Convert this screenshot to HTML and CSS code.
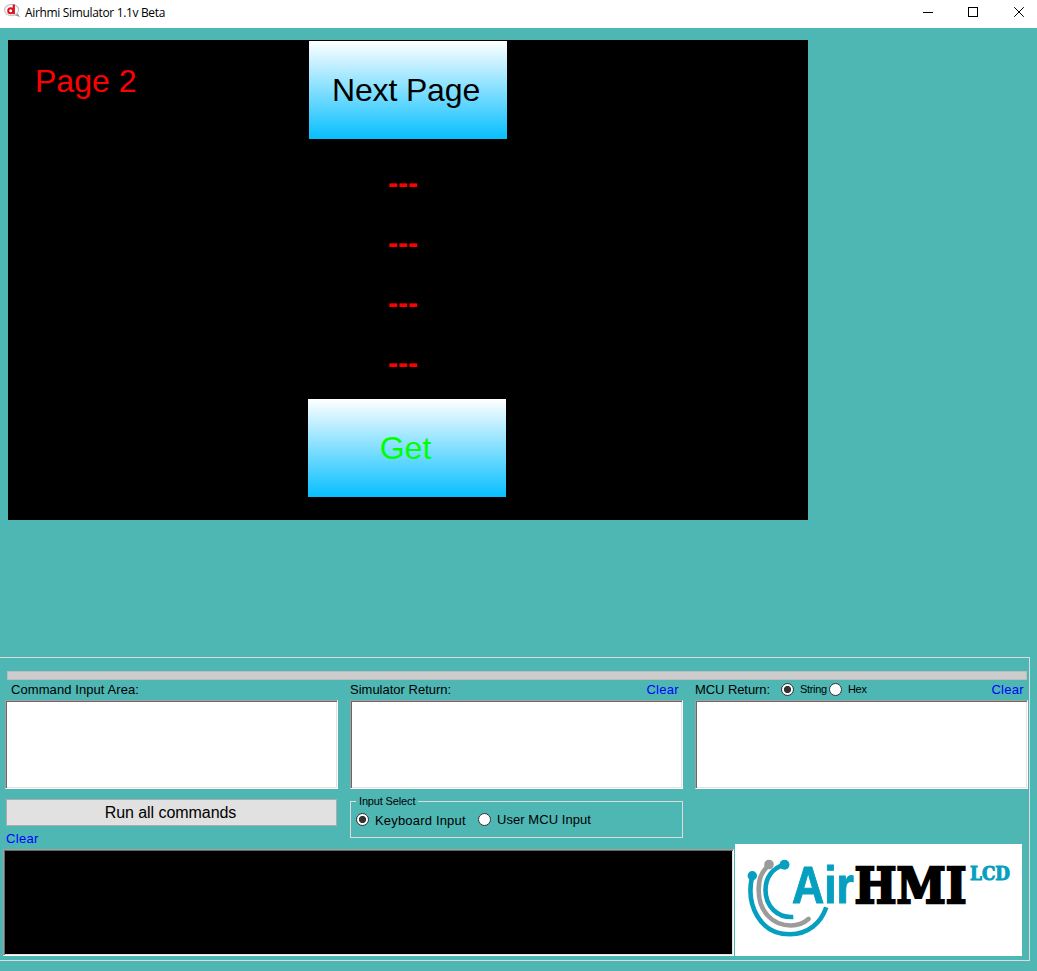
FILE: index.html
```html
<!DOCTYPE html>
<html lang="en">
<head>
<meta charset="utf-8">
<title>Airhmi Simulator 1.1v Beta</title>
<link rel="stylesheet" href="styles.css">
</head>
<body>
<header class="titlebar">
  <svg class="app-icon" width="18" height="18" viewBox="0 0 18 18">
    <path d="M11 13.500L16 15L13.500 11" fill="#999"/>
    <ellipse cx="7.600" cy="8" rx="7" ry="5.600" fill="#fff" stroke="#c4c4c4" stroke-width="1.200"/>
    <ellipse cx="6.700" cy="8.700" rx="2.500" ry="2.500" fill="none" stroke="#e01020" stroke-width="2"/>
    <path d="M9.800 2.500V12.200" stroke="#e01020" stroke-width="2.200"/>
  </svg>
  <h1 class="title">Airhmi Simulator 1.1v Beta</h1>
  <svg class="window-controls" width="115" height="28" viewBox="0 0 115 28" fill="none" stroke="#000">
    <path d="M1 12.500H11"/>
    <rect x="46.500" y="7.500" width="9" height="9"/>
    <path d="M92.200 7.200L101.800 16.800M101.800 7.200L92.200 16.800"/>
  </svg>
</header>
<main class="workspace">
  <section class="lcd">
    <div class="page-name">Page 2</div>
    <div class="lcd-center">
      <button class="lcd-button next"><span>Next Page</span></button>
      <div class="values">
        <span>---</span><span>---</span><span>---</span><span>---</span>
      </div>
      <button class="lcd-button get"><span>Get</span></button>
    </div>
  </section>
  <section class="panel">
    <div class="progress"></div>
    <div class="columns">
      <div class="column">
        <div class="caption first"><span class="t-command">Command Input Area:</span></div>
        <div class="box"></div>
      </div>
      <div class="column">
        <div class="caption"><span class="t-sim">Simulator Return:</span><a class="clear">Clear</a></div>
        <div class="box"></div>
      </div>
      <div class="column">
        <div class="caption"><span class="t-mcu">MCU Return:</span>
          <i class="radio on"></i><span class="small string">String</span>
          <i class="radio"></i><span class="small hex">Hex</span>
          <a class="clear">Clear</a></div>
        <div class="box"></div>
      </div>
    </div>
    <div class="columns tools">
      <div class="column">
        <button class="run">Run all commands</button>
        <a class="clear below">Clear</a>
      </div>
      <fieldset class="group">
        <legend>Input Select</legend>
        <div class="options">
          <label class="option keyboard"><i class="radio on"></i><span>Keyboard Input</span></label>
          <label class="option user"><i class="radio"></i><span>User MCU Input</span></label>
        </div>
      </fieldset>
    </div>
    <div class="bottom">
      <div class="console"></div>
      <svg class="logo" width="287" height="112" viewBox="0 0 287 112">
        <g fill="none" stroke-width="4.600">
          <path d="M17 33C11 60 24 90.300 55 90.300C73 90.300 86 79 91.300 63.300" stroke="#069fc0"/>
          <path d="M34 21C25 29 23.700 37 23.700 46C23.700 68 38 81.500 56 81.500Q66 81.500 73.500 75" stroke="#9b9b9b" stroke-linecap="round"/>
          <path d="M49 21C37 24 30.500 34 30.500 46C30.500 63 43 74 58.300 73" stroke="#069fc0"/>
        </g>
        <g fill="#069fc0"><circle cx="17.300" cy="31.700" r="4.700"/><circle cx="49.500" cy="20.700" r="5"/></g>
        <circle cx="34" cy="20.500" r="4.800" fill="#9b9b9b"/>
        <text class="logo-air" x="57" y="59.200" textLength="62" lengthAdjust="spacingAndGlyphs">Air</text>
        <text class="logo-hmi" x="119.500" y="58.700" textLength="112" lengthAdjust="spacingAndGlyphs">HMI</text>
        <text class="logo-lcd" x="235" y="36" textLength="40" lengthAdjust="spacingAndGlyphs">LCD</text>
      </svg>
    </div>
  </section>
</main>
</body>
</html>
```
FILE: styles.css
```css
* { box-sizing: border-box; }
body {
  margin: 0;
  width: 1037px;
  height: 971px;
  overflow: hidden;
  background: #4eb6b3;
  color: #000;
  font-family: "Liberation Sans", Arial, sans-serif;
}
button { font-family: inherit; padding: 0; }
.titlebar {
  display: flex;
  height: 28px;
  padding-left: 4px;
  background: #fff;
}
.app-icon { margin-top: 2px; }
.title {
  margin: 0 auto 0 3px;
  font: 400 12px/26px "Open Sans", "Noto Sans", sans-serif;
  letter-spacing: -0.34px;
  white-space: nowrap;
}
.workspace { padding-top: 12px; }
.lcd {
  display: flex;
  width: 800px;
  height: 480px;
  margin-left: 8px;
  background: #000;
}
.page-name {
  width: 300px;
  padding: 23px 0 0 27px;
  color: #f00;
  font-size: 32px;
  line-height: 37px;
}
.lcd-center { width: 199px; padding-top: 1px; }
.lcd-button {
  display: block;
  width: 198px;
  height: 98px;
  border: 0;
  background: linear-gradient(#fff, #06bfff);
  font-size: 32px;
}
.next { margin-left: 1px; padding-right: 4px; color: #000; letter-spacing: -0.15px; }
.get { color: #0f0; padding-right: 3px; }
.values {
  display: flex;
  flex-direction: column;
  height: 260px;
  padding: 14px 0 0 80px;
  color: #f00;
  font-size: 30px;
  font-weight: 700;
  line-height: 60px;
}
.panel {
  width: 1030px;
  height: 304px;
  margin-top: 137px;
  padding-top: 13px;
  border: 1px solid #dcdcdc;
  border-left: 0;
}
.progress {
  width: 1020px;
  height: 9px;
  margin-left: 7px;
  border: 1px solid #bcbcbc;
  background: #ccc;
}
.columns {
  display: grid;
  grid-template-columns: 333px 333px 333px;
  gap: 12px;
  width: 1023px;
  margin-left: 5px;
}
.caption {
  display: flex;
  align-items: center;
  height: 20px;
  padding: 0 4px 2px 0;
  font-size: 13px;
  white-space: nowrap;
}
.caption.first { padding-left: 6px; }
.t-command { letter-spacing: 0.08px; }
.t-mcu { letter-spacing: -0.08px; }
.clear { color: #00f; font-size: 13px; letter-spacing: 0.3px; }
.caption .clear { margin-left: auto; }
.radio {
  flex: none;
  width: 13px;
  height: 13px;
  border: 1px solid #333;
  border-radius: 50%;
  background: #fff;
}
.radio.on { background: radial-gradient(circle, #333 3.2px, #fff 4px); }
.caption .radio.on { margin-left: 11px; }
.small { font-size: 11px; letter-spacing: -0.3px; }
.string { width: 29px; margin-left: 6px; }
.hex { margin-left: 6px; }
.box, .console {
  border: 1px solid;
  border-color: #a0a0a0 #fff #fff #a0a0a0;
  box-shadow: inset 1px 1px #696969, inset -1px -1px #e3e3e3;
}
.box { height: 89px; background: #fff; }
.tools { height: 45px; margin-top: 10px; }
.run {
  display: block;
  width: 331px;
  height: 27px;
  margin-left: 1px;
  padding-right: 2px;
  border: 1px solid #adadad;
  background: #e1e1e1;
  font-size: 16px;
  letter-spacing: -0.06px;
}
.below { display: block; margin: 4px 0 0 1px; line-height: 18px; }
.group {
  min-width: 0;
  height: 43px;
  margin: -4px 0 0;
  padding: 0 0 0 5px;
  border: 1px solid #dcdcdc;
}
.group legend {
  padding: 1px 3px 0 3px;
  font-size: 11px;
  line-height: 11px;
  letter-spacing: -0.15px;
}
.options {
  display: flex;
  align-items: flex-start;
  padding-top: 3px;
  font-size: 13px;
  white-space: nowrap;
}
.option { display: flex; align-items: center; gap: 6px; height: 18px; }
.keyboard { width: 122px; letter-spacing: 0.18px; }
.keyboard span { padding-top: 2px; }
.user { letter-spacing: 0.05px; }
.bottom {
  display: flex;
  align-items: flex-end;
  gap: 1px;
  height: 112px;
  margin-left: 3px;
}
.console { width: 731px; height: 107px; background: #000; }
.logo { display: block; background: #fff; }
.logo-air {
  fill: #069fc0;
  font: 700 52px "Liberation Sans", sans-serif;
  stroke: #069fc0;
  stroke-width: 1px;
}
.logo-hmi {
  font: 700 48px "DejaVu Serif", serif;
  stroke: #000;
  stroke-width: 2.4px;
}
.logo-lcd {
  fill: #069fc0;
  font: 700 18px "DejaVu Serif", serif;
  stroke: #069fc0;
  stroke-width: 1px;
}
```
